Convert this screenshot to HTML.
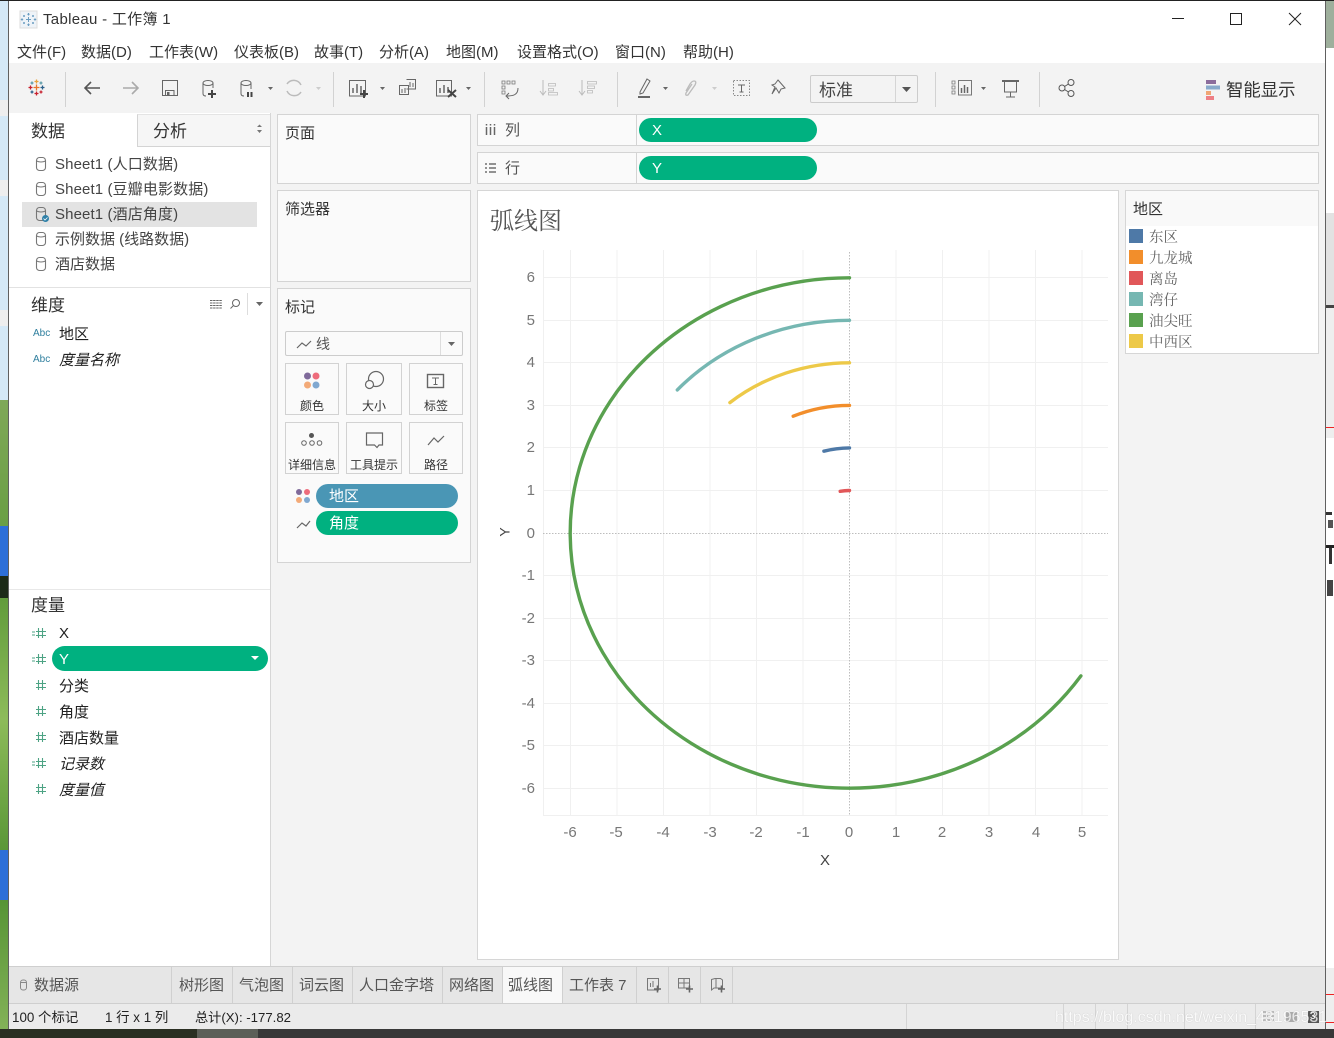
<!DOCTYPE html>
<html lang="zh"><head><meta charset="utf-8"><title>Tableau - 工作簿 1</title>
<style>
html,body{margin:0;padding:0}
body{width:1334px;height:1038px;position:relative;overflow:hidden;background:#fff;font-family:"Liberation Sans","Noto Sans CJK SC",sans-serif;color:#333}
div{position:absolute}
.t{position:absolute;white-space:nowrap;line-height:20px;font-size:15px;margin-top:1px}
.n{margin-top:0}
.i{font-style:italic}
.b{background:#fafafa;border:1px solid #d4d4d4;box-sizing:border-box}
.pill{border-radius:12px;color:#fff;box-sizing:border-box;font-size:15px;line-height:25px;padding-left:13px}
.g{background:#00b180}
.sw{left:1129px;width:14px;height:14px}
.lg{position:absolute;left:1149px;color:#666;font:14.5px/20px "Noto Serif CJK SC",serif;white-space:nowrap}
.btn{background:#fafafa;border:1px solid #d2d2d2;box-sizing:border-box;height:52px}
.bl{font-size:12px;color:#333;white-space:nowrap;text-align:center;position:absolute;left:-4px;right:-4px;top:33px;line-height:18px}
.yt{position:absolute;left:498px;width:37px;text-align:right;color:#777;font-size:15px;line-height:20px}
.xt{position:absolute;top:823px;width:30px;text-align:center;color:#777;font-size:15px;line-height:20px}
.tab{position:absolute;top:976px;font-size:15px;color:#555;line-height:20px;white-space:nowrap}
.v{top:967px;width:1px;height:36px;background:#d0d0d0}
.sv{top:1004px;width:1px;height:25px;background:#d4d4d4}
.abc{position:absolute;left:33px;font-size:10px;color:#2f7f9e;line-height:12px}
</style></head><body>
<!-- desktop strips -->
<div style="left:0;top:0;width:8px;height:400px;background:#d5e9f7"></div>
<div style="left:0;top:400px;width:8px;height:638px;background:linear-gradient(#7fa858,#5f9a3a 30%,#8dbb5a 50%,#4f8f30 75%,#86b45a)"></div>
<div style="left:0;top:526px;width:8px;height:50px;background:#2d6fd8"></div>
<div style="left:0;top:576px;width:8px;height:22px;background:#1c2a18"></div>
<div style="left:0;top:850px;width:8px;height:50px;background:#2d6fd8"></div>
<div style="left:0;top:100px;width:8px;height:16px;background:#eee"></div>
<div style="left:0;top:180px;width:8px;height:16px;background:#eee"></div>
<div style="left:0;top:310px;width:8px;height:16px;background:#eee"></div>
<div style="left:1326px;top:0;width:8px;height:48px;background:#9eaf9c"></div>
<div style="left:1326px;top:48px;width:8px;height:165px;background:#fff"></div>
<div style="left:1326px;top:213px;width:8px;height:92px;background:#e2e2e2"></div>
<div style="left:1326px;top:305px;width:8px;height:3px;background:#444"></div>
<div style="left:1326px;top:308px;width:8px;height:130px;background:#eee"></div>
<div style="left:1326px;top:438px;width:8px;height:530px;background:#fff"></div>
<div style="left:1326px;top:968px;width:8px;height:70px;background:#eee"></div>
<div style="left:1326px;top:512px;width:6px;height:3px;background:#333"></div>
<div style="left:1328px;top:520px;width:5px;height:8px;background:#555"></div>
<div style="left:1326px;top:545px;width:8px;height:3px;background:#222"></div>
<div style="left:1329px;top:548px;width:3px;height:16px;background:#333"></div>
<div style="left:1327px;top:580px;width:6px;height:16px;background:#444"></div>
<div style="left:1326px;top:427px;width:8px;height:1px;background:#e22"></div>
<div style="left:1326px;top:994px;width:8px;height:1px;background:#e22"></div>
<div style="left:1326px;top:1022px;width:8px;height:1px;background:#e22"></div>
<!-- window -->
<div style="left:8px;top:0;width:1318px;height:1029px;background:#fff;border-left:1px solid #606060;border-right:1px solid #606060;box-sizing:border-box"></div>
<div style="left:0;top:0;width:1334px;height:1px;background:#222"></div>
<div style="left:0;top:1029px;width:1334px;height:9px;background:#383838"></div>
<div style="left:0;top:1029px;width:197px;height:9px;background:#2a2f22"></div>
<div style="left:197px;top:1029px;width:61px;height:9px;background:#5c5f58"></div>
<!-- title + menu -->
<span class="t n" style="left:43px;top:10px;font-size:15px;color:#333;letter-spacing:.3px">Tableau - 工作簿 1</span>
<span class="t" style="left:17px;top:42px">文件(F)</span>
<span class="t" style="left:81px;top:42px">数据(D)</span>
<span class="t" style="left:149px;top:42px">工作表(W)</span>
<span class="t" style="left:234px;top:42px">仪表板(B)</span>
<span class="t" style="left:314px;top:42px">故事(T)</span>
<span class="t" style="left:379px;top:42px">分析(A)</span>
<span class="t" style="left:446px;top:42px">地图(M)</span>
<span class="t" style="left:517px;top:42px">设置格式(O)</span>
<span class="t" style="left:615px;top:42px">窗口(N)</span>
<span class="t" style="left:683px;top:42px">帮助(H)</span>
<!-- toolbar -->
<div style="left:9px;top:63px;width:1316px;height:50px;background:#f3f3f3"></div>
<div style="left:810px;top:75px;width:108px;height:28px;background:#f3f3f3;border:1px solid #ccc;border-radius:2px;box-sizing:border-box"></div>
<div style="left:895px;top:76px;width:1px;height:26px;background:#d5d5d5"></div>
<span class="t" style="left:819px;top:80px;font-size:17px;color:#444">标准</span>
<span class="t" style="left:1226px;top:79px;font-size:17.4px;color:#333">智能显示</span>
<!-- middle bg -->
<div style="left:271px;top:113px;width:1054px;height:853px;background:#f3f3f3"></div>
<!-- left panel -->
<div style="left:270px;top:113px;width:1px;height:853px;background:#d6d6d6"></div>
<div style="left:137px;top:114px;width:133px;height:33px;background:#f6f6f6;border-left:1px solid #d4d4d4;border-bottom:1px solid #d4d4d4;border-top:1px solid #e4e4e4;box-sizing:border-box"></div>
<span class="t n" style="left:31px;top:122px;font-size:17px">数据</span>
<span class="t n" style="left:153px;top:122px;font-size:17px">分析</span>
<div style="left:22px;top:202px;width:235px;height:25px;background:#e3e3e3"></div>
<span class="t" style="left:55px;top:154px;color:#444;letter-spacing:.12px">Sheet1 (人口数据)</span>
<span class="t" style="left:55px;top:179px;color:#444;letter-spacing:.12px">Sheet1 (豆瓣电影数据)</span>
<span class="t" style="left:55px;top:204px;color:#444;letter-spacing:.12px">Sheet1 (酒店角度)</span>
<span class="t" style="left:55px;top:229px;color:#444">示例数据 (线路数据)</span>
<span class="t" style="left:55px;top:254px;color:#444">酒店数据</span>
<div style="left:9px;top:287px;width:261px;height:1px;background:#e2e2e2"></div>
<div style="left:9px;top:589px;width:261px;height:1px;background:#e8e8e8"></div>
<span class="t" style="left:31px;top:295px;font-size:17px">维度</span>
<span class="abc" style="top:328px">Abc</span><span class="t" style="left:59px;top:324px;color:#222">地区</span>
<span class="abc" style="top:354px">Abc</span><span class="t i" style="left:59px;top:350px;color:#222">度量名称</span>
<span class="t" style="left:31px;top:595px;font-size:17px">度量</span>
<div class="pill g" style="left:52px;top:646px;width:216px;height:25px;padding-left:7px;border-radius:13px;line-height:28px">Y</div>
<span class="t" style="left:59px;top:623px;color:#222">X</span>
<span class="t" style="left:59px;top:676px;color:#222">分类</span>
<span class="t" style="left:59px;top:702px;color:#222">角度</span>
<span class="t" style="left:59px;top:728px;color:#222">酒店数量</span>
<span class="t i" style="left:59px;top:754px;color:#222">记录数</span>
<span class="t i" style="left:59px;top:780px;color:#222">度量值</span>
<!-- cards -->
<div class="b" style="left:277px;top:114px;width:194px;height:70px"></div>
<span class="t" style="left:285px;top:123px">页面</span>
<div class="b" style="left:277px;top:190px;width:194px;height:92px"></div>
<span class="t" style="left:285px;top:199px">筛选器</span>
<div class="b" style="left:277px;top:288px;width:194px;height:275px"></div>
<span class="t" style="left:285px;top:297px">标记</span>
<div style="left:285px;top:331px;width:178px;height:25px;background:#fafafa;border:1px solid #ccc;border-radius:2px;box-sizing:border-box"></div>
<div style="left:440px;top:332px;width:1px;height:23px;background:#ddd"></div>
<span class="t n" style="left:316px;top:334px;font-size:14px;color:#555">线</span>
<div class="btn" style="left:285px;top:363px;width:54px"><span class="bl">颜色</span></div>
<div class="btn" style="left:346px;top:363px;width:56px"><span class="bl">大小</span></div>
<div class="btn" style="left:409px;top:363px;width:54px"><span class="bl">标签</span></div>
<div class="btn" style="left:285px;top:422px;width:54px"><span class="bl">详细信息</span></div>
<div class="btn" style="left:346px;top:422px;width:56px"><span class="bl">工具提示</span></div>
<div class="btn" style="left:409px;top:422px;width:54px"><span class="bl">路径</span></div>
<div class="pill" style="left:316px;top:484px;width:142px;height:24px;background:#4a96b5;line-height:26px">地区</div>
<div class="pill g" style="left:316px;top:511px;width:142px;height:24px">角度</div>
<!-- shelves -->
<div class="b" style="left:477px;top:114px;width:842px;height:32px"></div>
<div class="b" style="left:477px;top:152px;width:842px;height:32px"></div>
<div style="left:636px;top:115px;width:1px;height:30px;background:#d4d4d4"></div>
<div style="left:636px;top:153px;width:1px;height:30px;background:#d4d4d4"></div>
<span class="t" style="left:505px;top:120px;color:#555">列</span>
<span class="t" style="left:505px;top:158px;color:#555">行</span>
<div class="pill g" style="left:639px;top:118px;width:178px;height:24px">X</div>
<div class="pill g" style="left:639px;top:156px;width:178px;height:24px">Y</div>
<!-- viz -->
<div style="left:477px;top:190px;width:642px;height:770px;background:#fff;border:1px solid #d6d6d6;box-sizing:border-box"></div>
<span class="t n" style="left:490px;top:207px;font:24px/24px 'Noto Serif CJK SC',serif;color:#555">弧线图</span>
<svg style="position:absolute;left:0;top:0" width="1334" height="1038" viewBox="0 0 1334 1038" fill="none">
<g stroke="#f0f0f0" stroke-width="1">
<path d="M543.5 250V815M570.5 250V815M617 250V815M663.5 250V815M710 250V815M756.5 250V815M803 250V815M896 250V815M942.5 250V815M989 250V815M1035.5 250V815M1082 250V815"/>
<path d="M543 277.5H1108M543 320.5H1108M543 362.5H1108M543 405.5H1108M543 447.5H1108M543 490.5H1108M543 575.5H1108M543 618.5H1108M543 660.5H1108M543 703.5H1108M543 745.5H1108M543 788.5H1108M543 815.5H1108"/>
</g>
<path d="M849.5 252V815M543 533.5H1108" stroke="#bdbdbd" stroke-dasharray="1.5 1.5"/>
<g stroke-width="3.4" stroke-linecap="round">
<path d="M849.5 277.8A279.3 255.2 0 1 0 1080.9 675.9" stroke="#59a14f"/>
<path d="M849.5 320.3A232.75 212.7 0 0 0 677.3 389.9" stroke="#76b7b2"/>
<path d="M849.5 362.8A186.2 170.16 0 0 0 729.9 402.6" stroke="#edc948"/>
<path d="M849.5 405.4A139.65 127.62 0 0 0 793.2 416.2" stroke="#f28e2b"/>
<path d="M849.5 447.9A93.1 85.08 0 0 0 823.9 451.2" stroke="#4e79a7"/>
<path d="M849.5 490.5A46.55 42.54 0 0 0 840.2 491.3" stroke="#e15759"/>
</g>
</svg>
<span class="yt" style="top:268px">6</span><span class="yt" style="top:311px">5</span><span class="yt" style="top:353px">4</span><span class="yt" style="top:396px">3</span><span class="yt" style="top:438px">2</span><span class="yt" style="top:481px">1</span><span class="yt" style="top:524px">0</span><span class="yt" style="top:566px">-1</span><span class="yt" style="top:609px">-2</span><span class="yt" style="top:651px">-3</span><span class="yt" style="top:694px">-4</span><span class="yt" style="top:736px">-5</span><span class="yt" style="top:779px">-6</span>
<span class="xt" style="left:555px">-6</span><span class="xt" style="left:601px">-5</span><span class="xt" style="left:648px">-4</span><span class="xt" style="left:695px">-3</span><span class="xt" style="left:741px">-2</span><span class="xt" style="left:788px">-1</span><span class="xt" style="left:834px">0</span><span class="xt" style="left:881px">1</span><span class="xt" style="left:927px">2</span><span class="xt" style="left:974px">3</span><span class="xt" style="left:1021px">4</span><span class="xt" style="left:1067px">5</span>
<span class="t n" style="left:820px;top:851px;font-size:15px;color:#444">X</span>
<span class="t n" style="left:500px;top:522px;font-size:14px;color:#444;transform:rotate(-90deg)">Y</span>
<!-- legend -->
<div style="left:1125px;top:190px;width:194px;height:164px;background:#fff;border:1px solid #d6d6d6;box-sizing:border-box"></div>
<div style="left:1126px;top:191px;width:192px;height:35px;background:#f9f9f9"></div>
<span class="t" style="left:1133px;top:199px;color:#333">地区</span>
<div class="sw" style="top:229px;background:#4e79a7"></div><span class="lg" style="top:227px">东区</span>
<div class="sw" style="top:250px;background:#f28e2b"></div><span class="lg" style="top:248px">九龙城</span>
<div class="sw" style="top:271px;background:#e15759"></div><span class="lg" style="top:269px">离岛</span>
<div class="sw" style="top:292px;background:#76b7b2"></div><span class="lg" style="top:290px">湾仔</span>
<div class="sw" style="top:313px;background:#59a14f"></div><span class="lg" style="top:311px">油尖旺</span>
<div class="sw" style="top:334px;background:#edc948"></div><span class="lg" style="top:332px">中西区</span>
<!-- bottom -->
<div style="left:9px;top:966px;width:1316px;height:36px;background:#e6e6e6;border-top:1px solid #cfcfcf;border-bottom:1px solid #cfcfcf"></div>
<div style="left:9px;top:1004px;width:1316px;height:25px;background:#ebebeb"></div>
<div style="left:503px;top:967px;width:59px;height:36px;background:#f8f8f8"></div>
<div class="v" style="left:171px"></div><div class="v" style="left:232px"></div><div class="v" style="left:292px"></div><div class="v" style="left:352px"></div><div class="v" style="left:442px"></div><div class="v" style="left:502px"></div><div class="v" style="left:562px"></div><div class="v" style="left:636px"></div><div class="v" style="left:668px"></div><div class="v" style="left:700px"></div><div class="v" style="left:732px"></div>
<span class="tab" style="left:34px">数据源</span><span class="tab" style="left:179px">树形图</span><span class="tab" style="left:239px">气泡图</span><span class="tab" style="left:299px">词云图</span><span class="tab" style="left:359px">人口金字塔</span><span class="tab" style="left:449px">网络图</span><span class="tab" style="left:508px">弧线图</span><span class="tab" style="left:569px">工作表 7</span>
<span class="t n" style="left:12px;top:1008px;font-size:13.4px;color:#222">100 个标记</span>
<span class="t n" style="left:105px;top:1008px;font-size:13.4px;color:#222">1 行 x 1 列</span>
<span class="t n" style="left:195px;top:1008px;font-size:13.2px;color:#222">总计(X): -177.82</span>
<div class="sv" style="left:906px"></div><div class="sv" style="left:1063px"></div><div class="sv" style="left:1095px"></div><div class="sv" style="left:1127px"></div><div class="sv" style="left:1184px"></div><div class="sv" style="left:1255px"></div>
<!-- icons overlay -->
<svg style="position:absolute;left:0;top:0" width="1334" height="1038" viewBox="0 0 1334 1038" fill="none">
<!-- window controls -->
<path d="M1172 18.5H1184" stroke="#222"/><rect x="1230.5" y="13.5" width="11" height="11" stroke="#222"/><path d="M1289 13L1301 25M1301 13L1289 25" stroke="#222"/>
<!-- title logo -->
<rect x="20" y="11" width="17" height="17" fill="#eef3f8" stroke="#ddd"/>
<g stroke="#6a9cc0"><path d="M26 19.500h5M28.500 17v5M28.500 13v2.500M27.300 14.200h2.400M28.500 23.500v2.500M27.300 24.800h2.400M22 18.300v2.400M20.800 19.500h2.400M35 18.300v2.400M33.800 19.500h2.400M24 15v2M23 16h2M33 15v2M32 16h2M24 22v2M23 23h2M33 22v2M32 23h2"/></g>
<!-- tb logo -->
<g stroke-width="1.300">
<path d="M36.500 84.500v6M33.500 87.500h6" stroke="#e8762b"/>
<path d="M36.500 79.500v4M34.500 81.500h4" stroke="#e8a33b"/>
<path d="M36.500 91.500v4M34.500 93.500h4" stroke="#c7202e"/>
<path d="M30.500 85.500v4M28.500 87.500h4" stroke="#c7202e"/>
<path d="M42.500 85.500v4M40.500 87.500h4" stroke="#2b5f8a"/>
<path d="M32 81.500v3M30.500 83h3" stroke="#5b9aa8"/>
<path d="M41 81.500v3M39.500 83h3" stroke="#5b9aa8"/>
<path d="M32 90.500v3M30.500 92h3" stroke="#2b5f8a"/>
<path d="M41 90.500v3M39.500 92h3" stroke="#c7202e"/></g>
<!-- seps -->
<path d="M65.500 72V107M333.500 72V107M484.500 72V107M617.500 72V107M935.500 72V107M1039.500 72V107" stroke="#d2d2d2"/>
<!-- arrows -->
<path d="M100 88H85M91 82L85 88L91 94" stroke="#555" stroke-width="1.600"/>
<path d="M123 88H138M132 82L138 88L132 94" stroke="#aaa" stroke-width="1.600"/>
<path d="M162.500 80.500H177.500V95.500H162.500ZM165.500 95V90.500H174V95" stroke="#666"/><rect x="167" y="92" width="2.500" height="3" fill="#666"/>
<!-- db + -->
<g stroke="#666"><ellipse cx="208" cy="83" rx="5" ry="2.500"/><path d="M203 83V93.500Q203 96 206 96M213 83V88"/></g>
<path d="M208 94H216M212 90V98" stroke="#444" stroke-width="2"/>
<g stroke="#666"><ellipse cx="246" cy="83" rx="5" ry="2.500"/><path d="M241 83V93.500Q241 96 244 96M251 83V89"/></g>
<path d="M248 92V97M251.500 92V97" stroke="#444" stroke-width="2"/>
<path d="M268 87h5l-2.500 3zM380 87h5l-2.500 3zM466 87h5l-2.500 3zM663 87h5l-2.500 3zM981 87h5l-2.500 3z" fill="#666"/>
<path d="M316 87h5l-2.500 3zM712 87h5l-2.500 3z" fill="#ccc"/>
<path d="M287 84a8 8 0 0 1 14 1M301 92a8 8 0 0 1 -14 -1" stroke="#bbb" stroke-width="1.500"/>
<!-- chart + -->
<path d="M349.500 80.500H365.500V96H349.500Z" stroke="#666"/><path d="M353 93V88M357 93V84M361 93V86" stroke="#666" stroke-width="1.500"/><path d="M360 94H368M364 90V98" stroke="#444" stroke-width="2"/>
<path d="M406.500 79.500H415.500V89H406.500M399.500 85.500H408.500V94.500H399.500Z" stroke="#666"/><path d="M402 93V89M405 93V88M410 87V82M413 87V83" stroke="#666"/>
<path d="M436.500 80.500H451.500V96H436.500Z" stroke="#666"/><path d="M440 93V88M444 93V85M448 93V87" stroke="#666" stroke-width="1.500"/><path d="M448 90L456 97M456 90L448 97" stroke="#444" stroke-width="2"/>
<!-- swap -->
<path d="M502 81h3v3h-3zM507 81h3v3h-3zM512 81h3v3h-3zM502 86h3v3h-3zM502 91h3v3h-3z" stroke="#777" stroke-width=".8"/>
<path d="M518 88C518 95 513 96 507 96M509 93L506 96L509 99" stroke="#666"/>
<path d="M543 80V94M540 91L543 95L546 91" stroke="#bbb"/><path d="M548.500 88.500h5v2.500h-5zM548.500 83.500h7v2.500h-7zM548.500 92.500h9v2.500h-9z" stroke="#bbb" stroke-width=".8"/>
<path d="M582 80V94M579 91L582 95L585 91" stroke="#bbb"/><path d="M587.500 81.500h9v2.500h-9zM587.500 86h7v2.500h-7zM587.500 90.500h5v2.500h-5z" stroke="#bbb" stroke-width=".8"/>
<!-- pen -->
<path d="M640 92L647 79L650 81L643 93L640 94Z" stroke="#666"/><rect x="638" y="96" width="12" height="2" fill="#666"/>
<path d="M692 84L686 93Q685 96 688 95L695 85Q697 81 694 81Q692 81 690 84L686 91" stroke="#bbb" stroke-width="1.300"/>
<rect x="733.500" y="80.500" width="16" height="15" stroke="#888" stroke-dasharray="1.500 1.500"/>
<path d="M738 85H745M741.500 85V92M739.500 92H743.500" stroke="#666"/>
<path d="M778 80L785 88L781 89L779 93L776 88L772 94L775 87L772 85L775 84Z" stroke="#666"/>
<path d="M902 87h9l-4.500 5z" fill="#555"/>
<!-- layout -->
<path d="M952 81h3v3h-3zM952 86h3v3h-3zM952 91h3v3h-3z" stroke="#777" stroke-width=".8"/><path d="M958.500 80.500H971.500V95H958.500Z" stroke="#777"/><path d="M961.500 93V88M964.500 93V85M967.500 93V87" stroke="#666" stroke-width="1.500"/>
<path d="M1002 81H1019" stroke="#666" stroke-width="2"/><path d="M1004.500 81V92H1016.500V81M1010.500 92V97M1006 97H1015" stroke="#666"/>
<!-- share -->
<circle cx="1071" cy="82.500" r="3" stroke="#555"/><circle cx="1062" cy="88" r="3" stroke="#555"/><circle cx="1071" cy="93.500" r="3" stroke="#555"/><path d="M1064.500 86.500L1068.500 84M1064.500 89.500L1068.500 92" stroke="#555"/>
<!-- smart display -->
<rect x="1206" y="80" width="10" height="4" fill="#8b6d9c"/><rect x="1206" y="85.500" width="14" height="4" fill="#88aacb"/><rect x="1206" y="91" width="5" height="4" fill="#f0a574"/><rect x="1206" y="96" width="8" height="4" fill="#ee7f85"/>
<!-- tabs caret -->
<path d="M257 127L259.500 124.500L262 127ZM257 130L259.500 133L262 130Z" fill="#777"/>
<!-- db list -->
<g stroke="#777" stroke-width="1.100">
<rect x="36.500" y="157.500" width="9" height="13" rx="3"/><path d="M36.500 161Q41 163 45.500 161"/>
<rect x="36.500" y="182.500" width="9" height="13" rx="3"/><path d="M36.500 186Q41 188 45.500 186"/>
<rect x="36.500" y="207.500" width="9" height="13" rx="3"/><path d="M36.500 211Q41 213 45.500 211"/>
<rect x="36.500" y="232.500" width="9" height="13" rx="3"/><path d="M36.500 236Q41 238 45.500 236"/>
<rect x="36.500" y="257.500" width="9" height="13" rx="3"/><path d="M36.500 261Q41 263 45.500 261"/></g>
<circle cx="45.500" cy="218.500" r="3.500" fill="#2f80a8"/><path d="M43.500 218.500L45 220L47.500 217.500" stroke="#fff" stroke-width=".8"/>
<!-- dim header icons -->
<path d="M210 300.500H222M210 303H222M210 305.500H222M210 308H222" stroke="#666" stroke-dasharray="2.500 .6"/>
<circle cx="236" cy="303" r="3.500" stroke="#666"/><path d="M233.500 305.500L230.500 308.500" stroke="#666"/>
<path d="M247.500 293V315" stroke="#ddd"/><path d="M256 302h7l-3.500 4z" fill="#666"/>
<!-- # icons -->
<g stroke="#4da384" stroke-width="1.100">
<path d="M38.500 628V638M42.500 628V638M36 631.500H46M36 635.500H46"/><path d="M32 632H35M32 635H35"/>
<path d="M38.500 654V664M42.500 654V664M36 657.500H46M36 661.500H46"/><path d="M32 658H35M32 661H35"/>
<path d="M38.500 680V690M42.500 680V690M36 683.500H46M36 687.500H46"/>
<path d="M38.500 706V716M42.500 706V716M36 709.500H46M36 713.500H46"/>
<path d="M38.500 732V742M42.500 732V742M36 735.500H46M36 739.500H46"/>
<path d="M38.500 758V768M42.500 758V768M36 761.500H46M36 765.500H46"/><path d="M32 762H35M32 765H35"/>
<path d="M38.500 784V794M42.500 784V794M36 787.500H46M36 791.500H46"/></g>
<path d="M251 656h8l-4 4z" fill="#fff"/>
<!-- marks -->
<path d="M297 348L302 343L306 346L311 341" stroke="#666" stroke-width="1.200"/>
<path d="M448 342h7l-3.500 4z" fill="#666"/>
<circle cx="307.500" cy="376" r="3.500" fill="#7f6a9a"/><circle cx="316" cy="376" r="3.500" fill="#ee6c7c"/><circle cx="307.500" cy="385" r="3.500" fill="#f3aa78"/><circle cx="316" cy="385" r="3.500" fill="#80a8d0"/>
<circle cx="376" cy="379" r="7.500" stroke="#666" stroke-width="1.200"/><circle cx="369.500" cy="384.500" r="4" fill="#fafafa" stroke="#666" stroke-width="1.200"/>
<rect x="427.500" y="374.500" width="16" height="13" stroke="#666" stroke-width="1.400"/><path d="M432 378H439M435.500 378V384.500M433.500 384.500H437.500" stroke="#666"/>
<circle cx="311.500" cy="435.500" r="2.500" fill="#555"/><circle cx="304" cy="443" r="2.300" stroke="#666"/><circle cx="312" cy="443" r="2.300" stroke="#666"/><circle cx="319.500" cy="443" r="2.300" stroke="#666"/>
<path d="M366.500 433H382.500V445H379L377 447.500L374.500 445H366.500Z" stroke="#666" stroke-width="1.200"/>
<path d="M428 445L434 438L438 442L444 436" stroke="#666" stroke-width="1.200"/>
<circle cx="299" cy="492" r="3" fill="#7f6a9a"/><circle cx="307" cy="492" r="3" fill="#ee6c7c"/><circle cx="299" cy="500" r="3" fill="#f3aa78"/><circle cx="307" cy="500" r="3" fill="#80a8d0"/>
<path d="M297 528L302 523L306 526L310 521" stroke="#666" stroke-width="1.200"/>
<!-- shelves icons -->
<path d="M486.500 127V135M490.500 127V135M494.500 127V135" stroke="#666" stroke-width="1.500"/><path d="M486.500 124V125.500M490.500 124V125.500M494.500 124V125.500" stroke="#666" stroke-width="1.500"/>
<path d="M485 164H487M489 164H496M485 168H487M489 168H496M485 172H487M489 172H496" stroke="#555" stroke-width="1.300"/>
<!-- bottom icons -->
<g stroke="#888"><rect x="20.500" y="980" width="6" height="10" rx="2.500"/><path d="M20.500 982.500H26.500"/></g>
<path d="M647.500 978.500H658.500V990H647.500ZM650.500 987V983M653 987V981" stroke="#777"/><path d="M654 989H661M657.500 985.500V992.500" stroke="#666" stroke-width="1.600"/>
<path d="M678.500 978.500H689.500V988H678.500ZM678.500 983H689.500M684 978.500V988" stroke="#777"/><path d="M686 989H693M689.500 985.500V992.500" stroke="#666" stroke-width="1.600"/>
<path d="M711.500 979.500L715 978.500H720.500L722.500 980V988H714L711.500 990ZM716 979V988" stroke="#777"/><path d="M718 989H725M721.500 985.500V992.500" stroke="#666" stroke-width="1.600"/>
<!-- status icons -->
<path d="M1263 1012h12M1263 1016h12M1263 1020h12" stroke="#888" stroke-dasharray="3 1"/>
<rect x="1286" y="1012" width="11" height="10" fill="#aaa"/>
<rect x="1308" y="1011" width="11" height="12" fill="#555"/>
</svg>
<span class="t n" style="left:1310px;top:1007px;font-size:10px;color:#fff">3</span>
<span class="t n" style="left:1055px;top:1008px;font-size:16px;color:#fff;opacity:.75;text-shadow:0 0 1px #aaa">https://blog.csdn.net/weixin_43196531</span>
</body></html>
